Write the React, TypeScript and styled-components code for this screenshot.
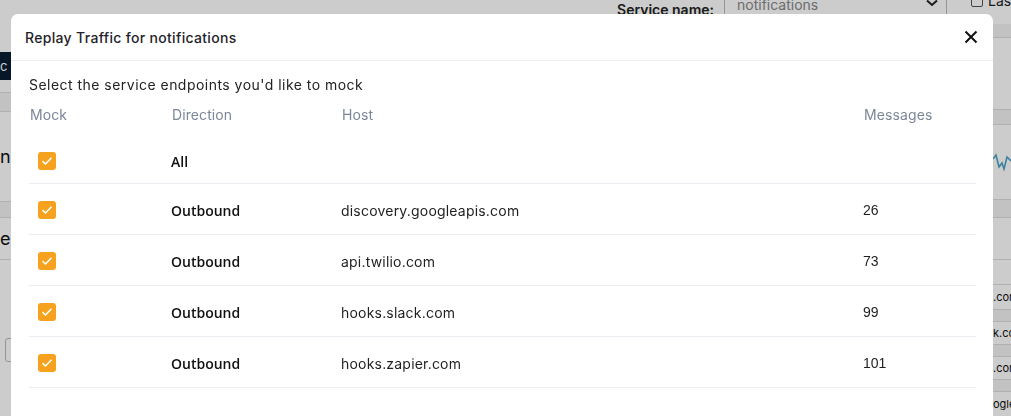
import React from 'react'
import styled, { createGlobalStyle } from 'styled-components'

const GlobalStyle = createGlobalStyle`
  *, *::before, *::after { box-sizing: border-box; }
  html, body { margin: 0; padding: 0; }
  body {
    width: 1011px;
    height: 416px;
    overflow: hidden;
    background: #ffffff;
    font-family: Inter, "Liberation Sans", sans-serif;
  }
`

const rows = [
  { host: 'discovery.googleapis.com', messages: 26 },
  { host: 'api.twilio.com', messages: 73 },
  { host: 'hooks.slack.com', messages: 99 },
  { host: 'hooks.zapier.com', messages: 101 },
]

const Page = styled.div`
  width: 1011px;
  height: 416px;
  display: flex;
  flex-direction: column;
  background: #fff;
`

const TopBar = styled.div`
  height: 24px;
  display: flex;
  align-items: flex-end;
  justify-content: flex-end;
  gap: 10px;
  font-size: 14px;
  color: #222;
`

const Label = styled.span`
  font-weight: 600;
  margin-bottom: 6px;
`

const SelectBox = styled.div`
  width: 223px;
  height: 24px;
  border-left: 1px solid #bbb;
  border-right: 1px solid #bbb;
  padding: 0 8px 0 12px;
  display: flex;
  align-items: flex-start;
  justify-content: space-between;
  color: #888;
  margin-right: 14px;
  line-height: 10px;
`

const LastBox = styled.div`
  width: 40px;
  display: flex;
  align-items: center;
  gap: 5px;
  margin-bottom: 15px;
  &::before {
    content: '';
    flex: none;
    width: 12px;
    height: 12px;
    border: 1px solid #555;
    border-radius: 2px;
  }
`

const Body = styled.div`
  flex: 1;
  display: flex;
  justify-content: space-between;
`

const Column = styled.div<{ $w: number }>`
  width: ${(p) => p.$w}px;
  display: flex;
  flex-direction: column;
  color: #111;
`

const DarkTab = styled.div`
  margin-top: 28px;
  height: 28px;
  background: #0b1d33;
  color: #fff;
  font-size: 13px;
  line-height: 28px;
`

const Stripe = styled.div<{ $h: number; $shade?: boolean; $size?: number; $plain?: boolean }>`
  height: ${(p) => p.$h}px;
  flex: none;
  border-bottom: ${(p) => (p.$plain ? '0' : '1px solid #dcdcdc')};
  background: ${(p) => (p.$shade ? '#f3f3f3' : '#fff')};
  display: flex;
  align-items: center;
  overflow: hidden;
  white-space: nowrap;
  font-size: ${(p) => p.$size ?? 18}px;
`

const Ghost = styled.div`
  margin: 78px 0 0 5px;
  width: 20px;
  height: 24px;
  border: 1px solid #bbb;
  border-radius: 3px;
`

const Overlay = styled.div`
  position: fixed;
  inset: 0;
  background: rgba(0, 0, 0, 0.2);
`

const Modal = styled.div`
  position: fixed;
  top: 14px;
  left: 11px;
  width: 982px;
  height: 420px;
  background: #fff;
  border-radius: 7px 7px 0 0;
  display: flex;
  flex-direction: column;
`

const Header = styled.div`
  height: 47px;
  flex: none;
  padding: 0 14px;
  display: flex;
  align-items: center;
  justify-content: space-between;
  border-bottom: 1px solid #e9edf1;
`

const Title = styled.h2`
  margin: 0;
  font-size: 14px;
  font-weight: 500;
  color: #1f2328;
  letter-spacing: 0.32px;
`

const CloseButton = styled.button`
  border: 0;
  background: none;
  padding: 0;
  width: 16px;
  height: 16px;
  display: flex;
  cursor: pointer;
`

const Content = styled.div`
  padding: 15px 17px 0 18px;
`

const Intro = styled.p`
  margin: 0;
  height: 18px;
  font-size: 14px;
  line-height: 18px;
  color: #232323;
  letter-spacing: 0.47px;
`

const Table = styled.div`
  display: flex;
  flex-direction: column;
`

const Row = styled.div<{ $h: number; $pt?: number; $line?: boolean }>`
  height: ${(p) => p.$h}px;
  padding-top: ${(p) => p.$pt ?? 0}px;
  display: grid;
  grid-template-columns: 142px 170px 522px 1fr;
  align-items: center;
  border-bottom: ${(p) => (p.$line ? '1px solid #e9edf1' : '0')};
`

const HeadCell = styled.div`
  font-size: 14px;
  color: #7b879a;
  letter-spacing: 0.1px;
  padding-left: 1px;
`

const CheckCell = styled.div`
  padding-left: 9px;
  display: flex;
`

const Box = styled.span`
  width: 18px;
  height: 18px;
  border-radius: 3px;
  background: #f7a21e;
  display: flex;
  align-items: center;
  justify-content: center;
`

const DirCell = styled.div`
  font-family: "Open Sans", sans-serif;
  font-size: 14px;
  font-weight: 600;
  color: #111;
`

const HostCell = styled.div`
  font-size: 14px;
  color: #1f1f1f;
  letter-spacing: 0.2px;
`

const NumCell = styled.div`
  font-family: "Liberation Sans", Arial, sans-serif;
  font-size: 14px;
  color: #1f1f1f;
`

const Check = () => (
  <Box>
    <svg width="12" height="10" viewBox="0 0 12 10">
      <path d="M1.5 5.2 L4.5 8 L10.5 1.8" fill="none" stroke="#fff" strokeWidth="1.6" />
    </svg>
  </Box>
)

export default function App() {
  return (
    <>
      <GlobalStyle />
      <Page>
        <TopBar>
          <Label>Service name:</Label>
          <SelectBox>
            <span>notifications</span>
            <svg width="12" height="8" viewBox="0 0 12 8">
              <path d="M1 0.5 L6 5 L11 0.5" fill="none" stroke="#222" strokeWidth="2" />
            </svg>
          </SelectBox>
          <LastBox>Last</LastBox>
        </TopBar>
        <Body>
          <Column $w={20}>
            <DarkTab>c</DarkTab>
            <Stripe $h={13} />
            <Stripe $h={19} $shade />
            <Stripe $h={90}>nc</Stripe>
            <Stripe $h={16} $shade />
            <Stripe $h={42}>e</Stripe>
            <Ghost />
          </Column>
          <Column $w={18}>
            <Stripe $h={14} $shade />
            <Stripe $h={72} />
            <Stripe $h={15} $shade />
            <Stripe $h={75}>
              <svg width="18" height="30" viewBox="0 0 18 30">
                <path d="M0 12 L3 8 L6 20 L9 16 L11 22 L14 10 L18 14" fill="none" stroke="#4aa3c8" strokeWidth="1.6" />
              </svg>
            </Stripe>
            <Stripe $h={18} $shade />
            <Stripe $h={42} />
            <Stripe $h={25} />
            <Stripe $h={25} $size={11}>.com</Stripe>
            <Stripe $h={12} $shade />
            <Stripe $h={23} $size={11}>k.com</Stripe>
            <Stripe $h={12} $shade />
            <Stripe $h={23} $size={11}>.com</Stripe>
            <Stripe $h={12} $shade />
            <Stripe $h={24} $size={11} $plain>ogleapis</Stripe>
          </Column>
        </Body>
      </Page>
      <Overlay />
      <Modal>
        <Header>
          <Title>Replay Traffic for notifications</Title>
          <CloseButton aria-label="Close">
            <svg width="16" height="16" viewBox="0 0 16 16">
              <path d="M2.5 2.5 L13.5 13.5 M13.5 2.5 L2.5 13.5" stroke="#111" strokeWidth="2" />
            </svg>
          </CloseButton>
        </Header>
        <Content>
          <Intro>Select the service endpoints you'd like to mock</Intro>
          <Table>
            <Row $h={40}>
              <HeadCell>Mock</HeadCell>
              <HeadCell>Direction</HeadCell>
              <HeadCell>Host</HeadCell>
              <HeadCell>Messages</HeadCell>
            </Row>
            <Row $h={50} $pt={5} $line>
              <CheckCell><Check /></CheckCell>
              <DirCell>All</DirCell>
              <HostCell />
              <NumCell />
            </Row>
            {rows.map((r) => (
              <Row key={r.host} $h={51} $pt={2} $line>
                <CheckCell><Check /></CheckCell>
                <DirCell>Outbound</DirCell>
                <HostCell>{r.host}</HostCell>
                <NumCell>{r.messages}</NumCell>
              </Row>
            ))}
          </Table>
        </Content>
      </Modal>
    </>
  )
}
